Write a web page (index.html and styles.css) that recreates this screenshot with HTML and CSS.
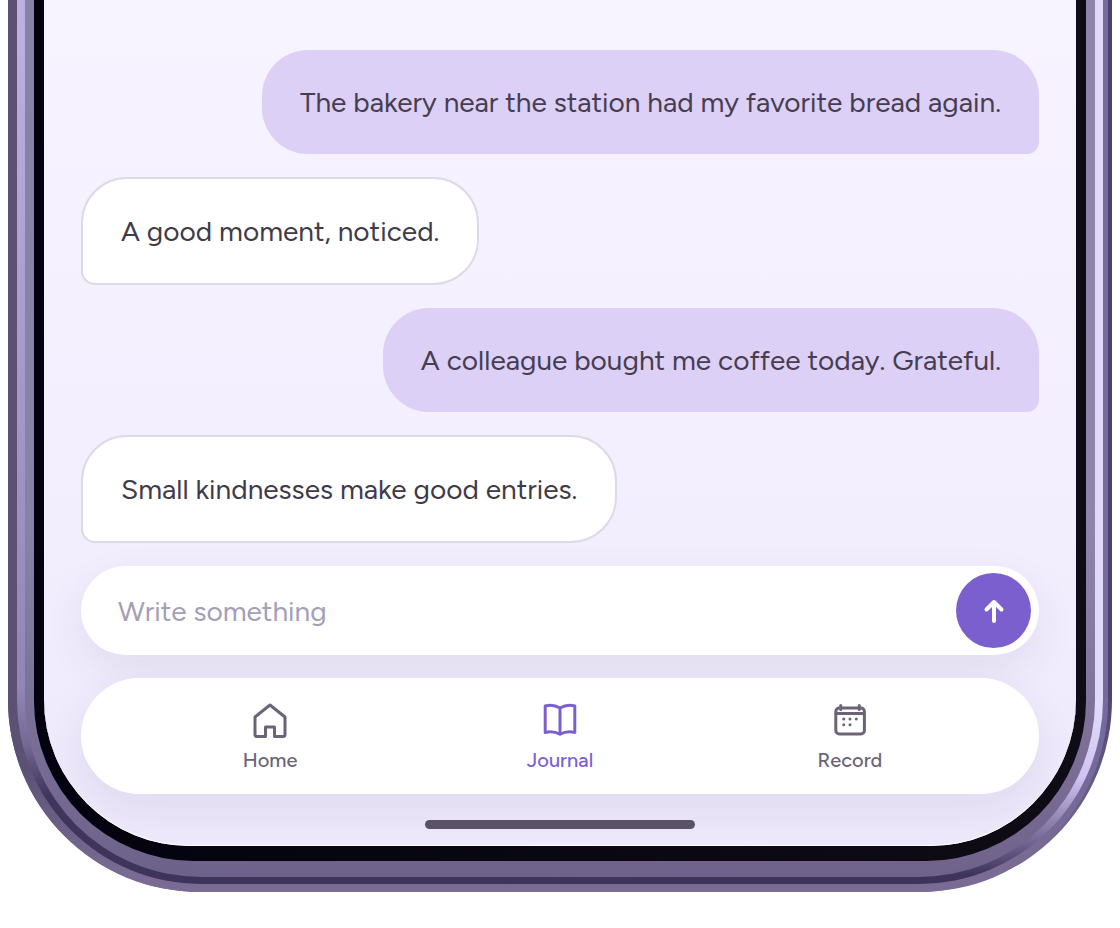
FILE: index.html
```
<!DOCTYPE html>
<html lang="en">
<head>
    <meta charset="utf-8">
    <meta name="viewport" content="width=device-width, initial-scale=1">
    <title>Journal</title>
    <link rel="stylesheet" href="styles.css">
</head>
<body>

<div class="phone">
<div class="phone-side">
<div class="phone-ring">
<div class="phone-band">
<div class="phone-bezel">
    <div class="screen">

        <main class="chat">
            <p class="bubble sent">The bakery near the station had my favorite bread again.</p>
            <p class="bubble received">A good moment, noticed.</p>
            <p class="bubble sent">A colleague bought me coffee today. Grateful.</p>
            <p class="bubble received">Small kindnesses make good entries.</p>
        </main>

        <form class="composer">
            <input type="text" placeholder="Write something" aria-label="Write something">
            <button type="submit" class="send" aria-label="Send">
                <svg viewBox="0 0 24 24" width="24" height="24">
                    <path d="M12 22V3M4.500 10.500L12 3L19.500 10.500"/>
                </svg>
            </button>
        </form>

        <nav class="tabs">
            <a href="#home" class="tab">
                <svg viewBox="0 0 36 36" width="36" height="36">
                    <path d="M18 3L33 15V32.500Q33 34.500 31 34.500H22.500V25H13.500V34.500H5Q3 34.500 3 32.500V15Z"/>
                </svg>
                <span>Home</span>
            </a>
            <a href="#journal" class="tab active">
                <svg viewBox="0 0 36 36" width="36" height="36">
                    <path d="M18 6Q11 1.800 3.200 4V30.500Q11 28.500 18 32.300Q25 28.500 32.800 30.500V4Q25 1.800 18 6ZM18 6V32.300"/>
                </svg>
                <span>Journal</span>
            </a>
            <a href="#record" class="tab">
                <svg viewBox="0 0 36 36" width="36" height="36">
                    <rect x="3.800" y="6" width="28.600" height="26" rx="3.500"/>
                    <path d="M4 11.500H32M8.700 3.500V7.500M27.300 3.500V7.500"/>
                    <path d="M11.700 17h0M18 17h0M24.300 17h0M11.700 22.700h0M18 22.700h0"/>
                </svg>
                <span>Record</span>
            </a>
        </nav>

        <div class="home-indicator"></div>

    </div>
</div>
</div>
</div>
</div>
</div>

</body>
</html>
```
FILE: styles.css
```
* {
    box-sizing: border-box;
}

body {
    font-family: Figtree, Lato, sans-serif;
    margin: 0;
    background-color: #fff;
    color: #3f3b48;
}

/* Phone frame, from the outer edge to the screen */
.phone {
    margin: 0 8px 36px;
    padding-right: 4px;
    border-radius: 0 0 192px 192px;
    background: linear-gradient(to bottom, transparent 76%, #796b93 96%), linear-gradient(to right, #5a5174, #4a416c);
}

.phone-side {
    padding: 0 5px 8px 9px;
    border-radius: 0 0 190px 192px;
    background: linear-gradient(to bottom, transparent 86%, #796b93 98%), linear-gradient(to right, #5a5174, #756a9c);
}

.phone-ring {
    padding: 0 8px 7px;
    border-radius: 0 0 184px 184px;
    background:
        linear-gradient(to bottom, #bfb2e0, #9285b4 78%, #756996 84%, #40355c 90%, #3e3358) left / 50% 100% no-repeat,
        linear-gradient(to bottom, #e2dafa 80%, #d0c2f2 88%, #756996 95%, #3e3358 99%) right / 50% 100% no-repeat;
}

.phone-band {
    padding: 0 9px 16px;
    border-radius: 0 0 176px 176px;
    background: linear-gradient(to bottom, transparent 60%, rgba(90, 76, 118, 0.6)), linear-gradient(to right, #8982a8, #8f84ac);
}

.phone-bezel {
    padding: 0 10px 15px;
    border-radius: 0 0 160px 160px;
    background: linear-gradient(to right, #04020e, #0f0c16);
}

.screen {
    padding: 50px 37px 17px;
    border-radius: 0 0 146px 146px;
    background: linear-gradient(to bottom, #f7f3ff, #f2eefe 65%, #ede8fb);
    box-shadow: inset 0 -1px 0 #fff;
    overflow: hidden;
}

/* Messages */
.chat {
    display: flex;
    flex-direction: column;
    gap: 23px;
    margin-bottom: 23px;
}

.bubble {
    margin: 0;
    padding: 33px 38px;
    font-size: 28px;
    line-height: 38px;
}

.sent {
    align-self: flex-end;
    border-radius: 46px 46px 12px 46px;
    background-color: #dcd0f6;
    color: #463d50;
}

.received {
    align-self: flex-start;
    border: 2px solid #dddae8;
    border-radius: 46px 46px 46px 14px;
    background-color: #fff;
}

/* Text box and send button */
.composer {
    display: flex;
    align-items: center;
    margin-bottom: 23px;
    padding: 7px 8px 7px 37px;
    border-radius: 45px;
    background-color: #fff;
    box-shadow: 0 14px 40px rgba(60, 40, 80, 0.08);
}

.composer input {
    flex: 1;
    min-width: 0;
    padding: 0;
    border: none;
    outline: none;
    background: none;
    font-family: inherit;
    font-size: 28px;
    color: #3f3b48;
}

.composer input::placeholder {
    color: #a49eb6;
}

.send {
    display: flex;
    justify-content: center;
    align-items: center;
    width: 75px;
    height: 75px;
    padding: 0;
    border: none;
    border-radius: 50%;
    background-color: #7c5fcf;
    cursor: pointer;
}

svg {
    fill: none;
    stroke: currentColor;
    stroke-width: 3;
    stroke-linecap: round;
    stroke-linejoin: round;
}

.send svg {
    color: #fff;
    stroke-width: 4;
}

/* Bottom tabs */
.tabs {
    display: grid;
    grid-template-columns: repeat(3, 1fr);
    padding: 24px 44px 20px;
    border-radius: 58px;
    background-color: #fff;
    box-shadow: 0 14px 40px rgba(60, 40, 80, 0.08);
}

.tab {
    display: flex;
    flex-direction: column;
    align-items: center;
    gap: 8px;
    font-size: 20px;
    line-height: 28px;
    font-weight: 500;
    color: #6b6477;
    text-decoration: none;
}

.tab.active {
    color: #7c5fcf;
}

.home-indicator {
    width: 270px;
    height: 9px;
    margin: 26px auto 0;
    border-radius: 5px;
    background-color: #5a5266;
}
```
